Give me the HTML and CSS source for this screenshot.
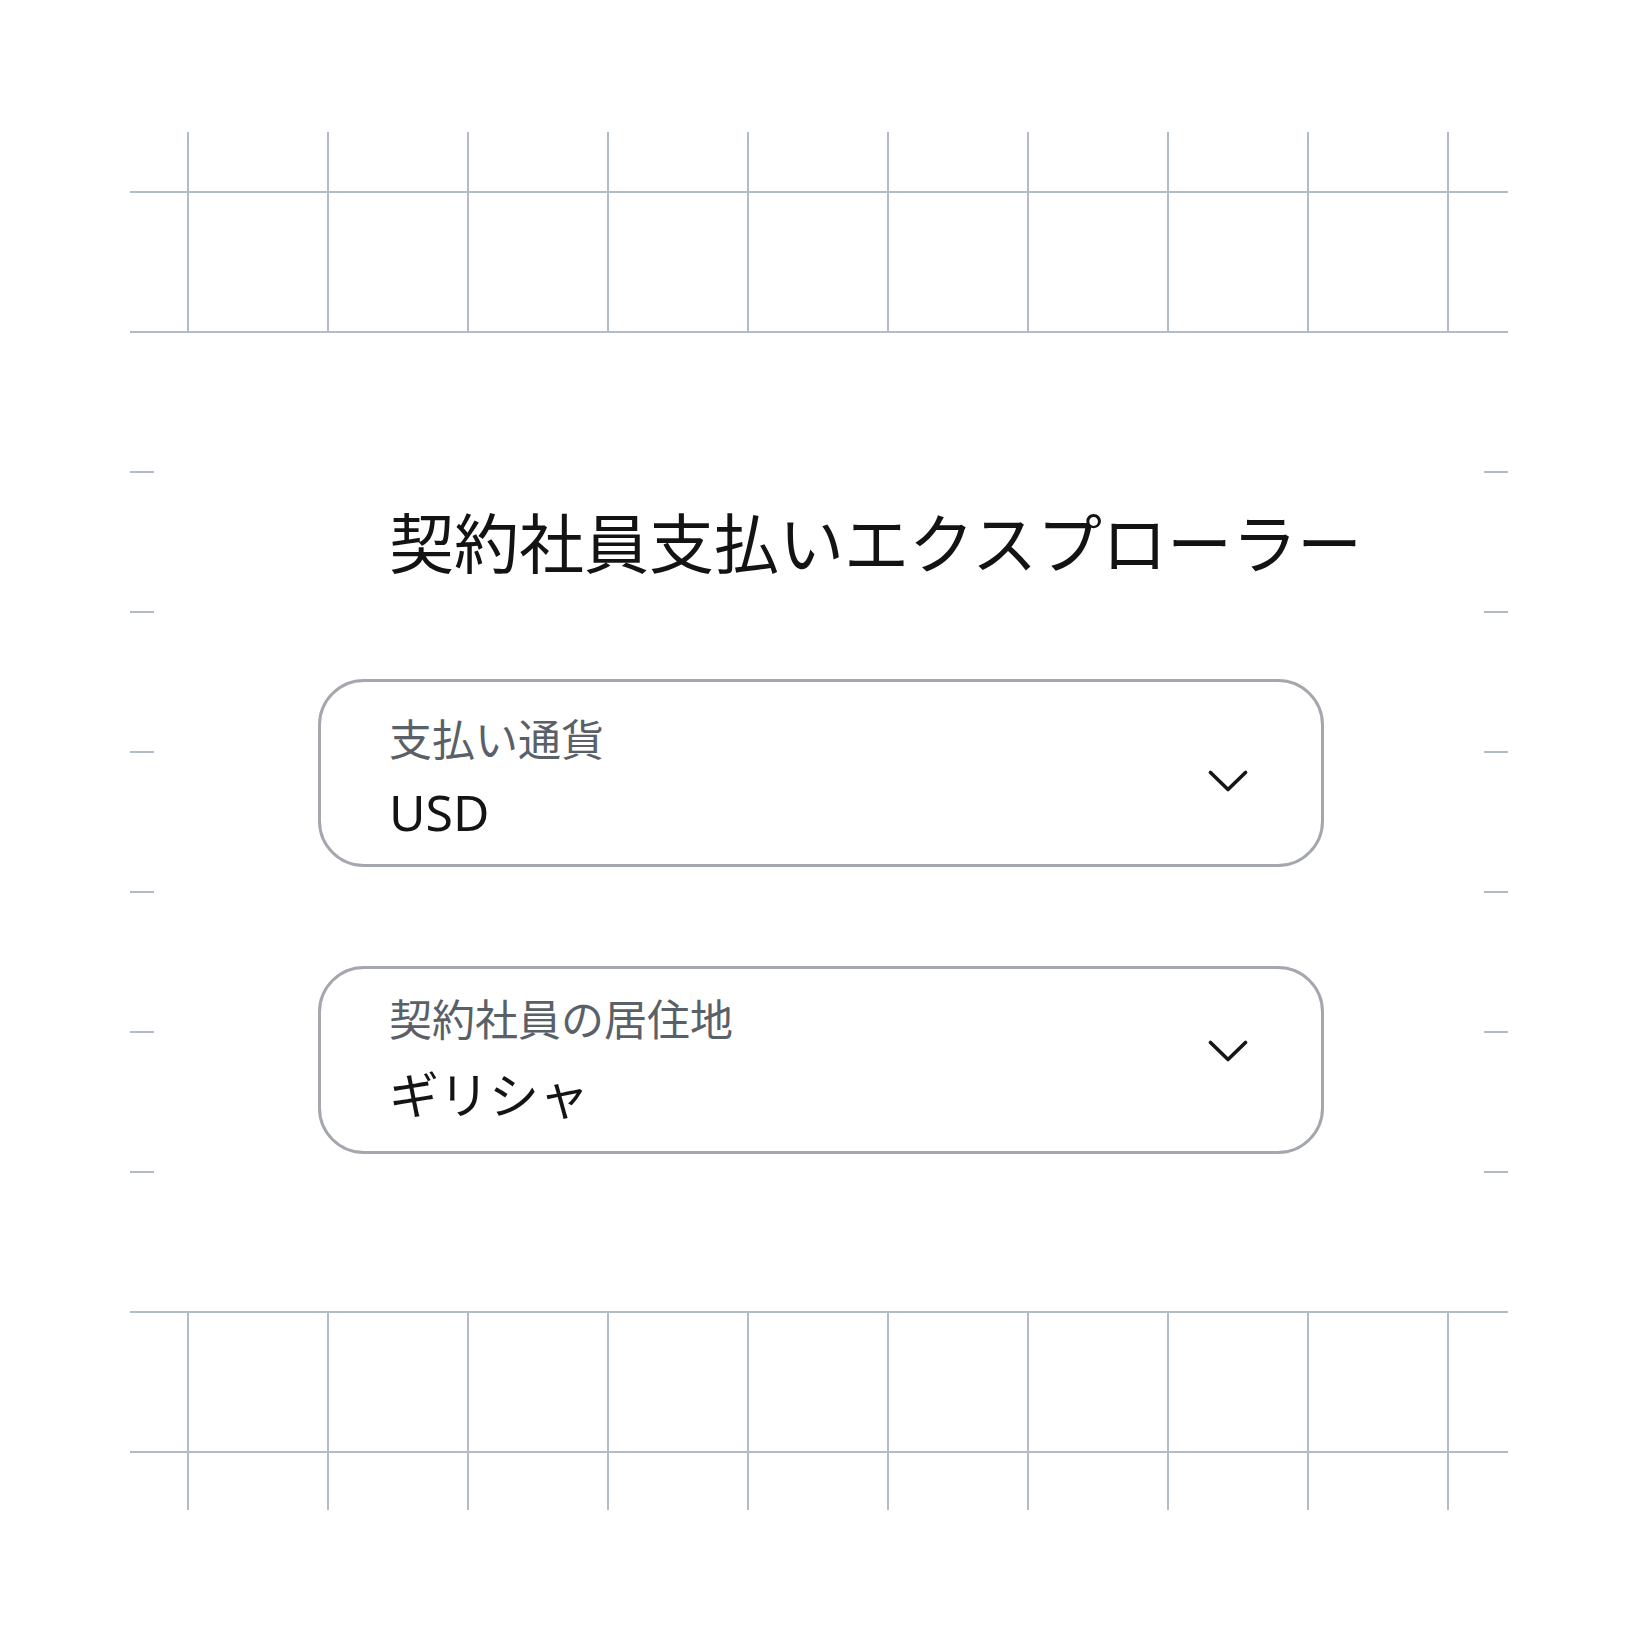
FILE: index.html
```html
<!DOCTYPE html>
<html lang="ja">
<head>
<meta charset="utf-8">
<title>契約社員支払いエクスプローラー</title>
<link rel="stylesheet" href="styles.css">
</head>
<body>
<div class="page">
  <div class="grid-band grid-band--top"></div>
  <main class="panel">
    <div class="content">
      <h1 class="title">契約社員支払いエクスプローラー</h1>
      <div class="field field--currency">
        <div class="field-text">
          <div class="field-label">支払い通貨</div>
          <div class="field-value">USD</div>
        </div>
        <svg class="chevron" width="40" height="22" viewBox="0 0 40 22" aria-hidden="true">
          <path d="M2.5 2.5 L20 19.5 L37.5 2.5" fill="none" stroke="#161616" stroke-width="3.6" stroke-linecap="round" stroke-linejoin="round"/>
        </svg>
      </div>
      <div class="field field--residence">
        <div class="field-text">
          <div class="field-label">契約社員の居住地</div>
          <div class="field-value">ギリシャ</div>
        </div>
        <svg class="chevron" width="40" height="22" viewBox="0 0 40 22" aria-hidden="true">
          <path d="M2.5 2.5 L20 19.5 L37.5 2.5" fill="none" stroke="#161616" stroke-width="3.6" stroke-linecap="round" stroke-linejoin="round"/>
        </svg>
      </div>
    </div>
  </main>
  <div class="grid-band grid-band--bottom"></div>
</div>
</body>
</html>
```
FILE: styles.css
```css
html, body {
  margin: 0;
  padding: 0;
  background: #ffffff;
}

.page {
  width: 1640px;
  height: 1640px;
  padding-top: 132px;
  box-sizing: border-box;
  font-family: "Noto Sans CJK JP", "Noto Sans", sans-serif;
}

.grid-band {
  margin-left: 130px;
  width: 1378px;
  --line: #b3bbc6;
}

.grid-band--top {
  height: 201px;
  background:
    linear-gradient(var(--line), var(--line)) 0 59px / 100% 2px no-repeat,
    linear-gradient(var(--line), var(--line)) 0 199px / 100% 2px no-repeat,
    repeating-linear-gradient(to right, transparent 0 57px, var(--line) 57px 59px, transparent 59px 140px);
}

.grid-band--bottom {
  height: 199px;
  background:
    linear-gradient(var(--line), var(--line)) 0 0 / 100% 2px no-repeat,
    linear-gradient(var(--line), var(--line)) 0 140px / 100% 2px no-repeat,
    repeating-linear-gradient(to right, transparent 0 57px, var(--line) 57px 59px, transparent 59px 140px);
}

.panel {
  margin-left: 130px;
  width: 1378px;
  height: 978px;
  --line: #b3bbc6;
  background:
    repeating-linear-gradient(to bottom, transparent 0 138px, var(--line) 138px 140px) left top / 24px 100% no-repeat,
    repeating-linear-gradient(to bottom, transparent 0 138px, var(--line) 138px 140px) right top / 24px 100% no-repeat;
}

.content {
  padding-top: 175px;
  margin-left: 188px;
  width: 1006px;
  display: flex;
  flex-direction: column;
}

.title {
  margin: 0 0 106px 0;
  padding-left: 71px;
  font-size: 65px;
  line-height: 65px;
  font-weight: 400;
  color: #131313;
  white-space: nowrap;
}

.field {
  box-sizing: border-box;
  height: 188px;
  border: 3px solid #a4a8ae;
  border-radius: 46px;
  display: flex;
  align-items: flex-start;
  justify-content: space-between;
  padding: 0 73px 0 68px;
  background: #ffffff;
}

.field + .field {
  margin-top: 99px;
}

.field-text {
  display: flex;
  flex-direction: column;
}

.field-label {
  font-size: 43px;
  line-height: 43px;
  color: #5a6068;
}

.field-value {
  font-family: "Noto Sans", "Noto Sans CJK JP", sans-serif;
  font-size: 50px;
  line-height: 50px;
  color: #141414;
}

.chevron {
  display: block;
  flex: none;
}

.field--currency .field-text { padding-top: 34px; }
.field--currency .field-value { margin-top: 28px; }
.field--currency .chevron { margin-top: 88px; }

.field--residence .field-text { padding-top: 27px; }
.field--residence .field-value { margin-top: 31px; }
.field--residence .chevron { margin-top: 71px; }
```
